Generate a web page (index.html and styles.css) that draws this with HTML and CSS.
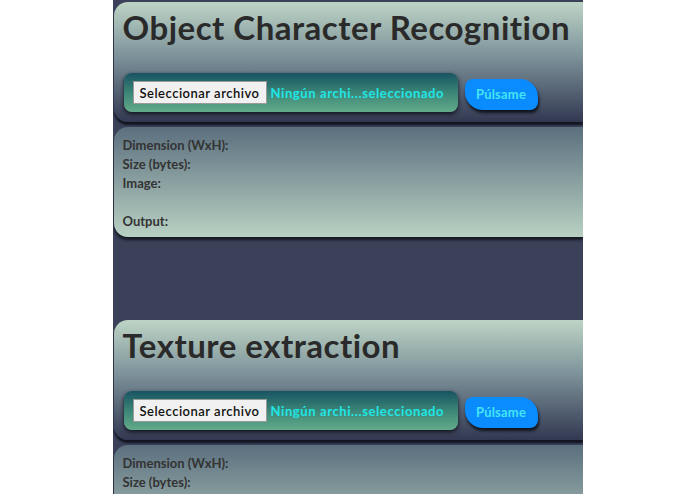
FILE: index.html
```html
<!DOCTYPE html>
<html lang="es">
<head>
<meta charset="utf-8">
<title>Tools</title>
<link rel="stylesheet" href="styles.css">
</head>
<body>
<main class="page">
  <section class="tool">
    <div class="head">
      <h1 class="title">Object Character Recognition</h1>
      <div class="controls">
        <div class="file">
          <span class="file-btn">Seleccionar archivo</span>
          <span class="file-name">Ningún archi...seleccionado</span>
        </div>
        <button class="go">Púlsame</button>
      </div>
    </div>
    <div class="info">
      <p>Dimension (WxH):</p>
      <p>Size (bytes):</p>
      <p>Image:</p>
      <p>&nbsp;</p>
      <p>Output:</p>
    </div>
  </section>
  <section class="tool">
    <div class="head">
      <h1 class="title">Texture extraction</h1>
      <div class="controls">
        <div class="file">
          <span class="file-btn">Seleccionar archivo</span>
          <span class="file-name">Ningún archi...seleccionado</span>
        </div>
        <button class="go">Púlsame</button>
      </div>
    </div>
    <div class="info">
      <p>Dimension (WxH):</p>
      <p>Size (bytes):</p>
      <p>Image:</p>
      <p>&nbsp;</p>
      <p>Output:</p>
    </div>
  </section>
</main>
</body>
</html>
```

FILE: styles.css
```css
html, body {
  margin: 0;
  padding: 0;
  background: #ffffff;
}
body {
  font-family: "Lato", "DejaVu Sans", sans-serif;
  font-variant-ligatures: none;
  color: #2e2e2e;
}
.page {
  width: 470px;
  height: 494px;
  margin: 0 auto;
  padding-top: 2px;
  box-sizing: border-box;
  background: #3a4159;
  overflow: hidden;
}
.tool {
  margin-bottom: 83px;
}
.head {
  margin-left: 1px;
  height: 120px;
  box-sizing: border-box;
  padding: 5px 0 0 9px;
  border-radius: 14px 0 0 14px;
  background: linear-gradient(to bottom, #bdd4c5 0%, #7d929a 45%, #323851 100%);
  box-shadow: 0 3px 2px #121520;
}
.title {
  margin: 0;
  font-size: 33px;
  line-height: 40px;
  font-weight: 700;
  letter-spacing: 0.5px;
  color: #2a2a2a;
  white-space: nowrap;
}
.controls {
  display: flex;
  align-items: center;
  margin-top: 26px;
  padding-left: 1px;
}
.file {
  display: flex;
  align-items: center;
  width: 334px;
  height: 39px;
  box-sizing: border-box;
  padding: 0 9px;
  border-radius: 8px;
  background: linear-gradient(to bottom, #185462 0%, #3b8577 50%, #63ab8a 100%);
  box-shadow: 0 2px 4px #10131c;
}
.file-btn {
  display: inline-block;
  height: 23px;
  line-height: 23px;
  padding: 0 6px;
  box-sizing: border-box;
  background: #f1f1f1;
  border: 1px solid #9a9a9a;
  font-size: 13px;
  font-weight: 600;
  letter-spacing: 0.5px;
  color: #111;
  white-space: nowrap;
}
.file-name {
  margin-left: 4px;
  font-size: 13px;
  font-weight: 700;
  letter-spacing: 0.6px;
  color: #1fe6e6;
  white-space: nowrap;
}
.go {
  margin-left: 7px;
  margin-top: 3px;
  width: 73px;
  height: 31px;
  border: 0;
  border-radius: 8px 18px 8px 18px;
  background: #0a8cff;
  color: #44e4f2;
  font-family: inherit;
  font-size: 13px;
  font-weight: 700;
  letter-spacing: 0.2px;
  box-shadow: 1px 3px 3px #11141c;
}
.info {
  margin-top: 5px;
  margin-left: 1px;
  height: 110px;
  box-sizing: border-box;
  padding: 9px 0 0 9px;
  border-radius: 14px 0 0 14px;
  background: linear-gradient(to bottom, #5b6f7e 0%, #b9d1c3 100%);
  box-shadow: 0 3px 3px #151822;
}
.info p {
  margin: 0;
  font-size: 13px;
  line-height: 19px;
  font-weight: 700;
  color: #333333;
}
```
